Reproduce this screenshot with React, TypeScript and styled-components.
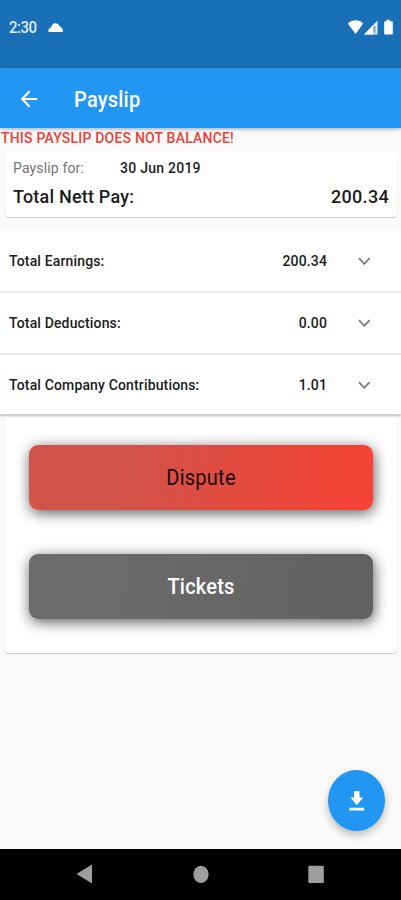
import React from 'react';
import styled, { createGlobalStyle } from 'styled-components';

const GlobalStyle = createGlobalStyle`
  * { box-sizing: border-box; }
  body { margin: 0; background: #fafafa; font-family: Roboto, sans-serif; }
`;

const Screen = styled.div`
  display: flex;
  flex-direction: column;
  width: 401px;
  height: 900px;
  overflow: hidden;
  background: #fafafa;
`;

const StatusBar = styled.header`
  display: flex;
  align-items: flex-start;
  justify-content: space-between;
  height: 68px;
  flex: none;
  padding: 19px 7px 0 9px;
  background: #1a70b7;
`;

const StatusGroup = styled.div<{ $gap: number }>`
  display: flex;
  align-items: center;
  height: 18px;
  gap: ${(p) => p.$gap}px;
`;

const Text = styled.span<{ $size: number; $weight?: number; $color?: string; $spacing?: number }>`
  display: block;
  white-space: nowrap;
  font-size: ${(p) => p.$size}px;
  line-height: 20px;
  font-weight: ${(p) => p.$weight ?? 500};
  color: ${(p) => p.$color ?? '#1c1c1c'};
  letter-spacing: ${(p) => p.$spacing ?? 0}px;
  transform: scaleY(1.07);
`;

const AppBar = styled.div`
  display: flex;
  align-items: center;
  gap: 34px;
  height: 60px;
  flex: none;
  padding: 3px 0 0 18px;
  background: #2196f3;
  box-shadow: 0 1px 4px rgba(0, 0, 0, 0.35);
  z-index: 1;
`;

const Warning = styled.div`
  height: 24px;
  flex: none;
  padding-left: 1px;
`;

const SummaryCard = styled.section`
  flex: none;
  height: 65px;
  margin: 0 4px 0 5px;
  padding: 6px 8px 0;
  background: #fff;
  border-radius: 4px;
  box-shadow: 0 1px 1px rgba(0, 0, 0, 0.2);
`;

const SummaryRow = styled.div<{ $height: number }>`
  display: grid;
  grid-template-columns: 107px 1fr auto;
  height: ${(p) => p.$height}px;
`;

const TotalRow = styled.div`
  display: flex;
  justify-content: space-between;
`;

const Panels = styled.section`
  flex: none;
  height: 184px;
  margin-top: 13px;
  background: #fff;
  box-shadow: 0 2px 2px rgba(0, 0, 0, 0.22);
`;

const Panel = styled.div`
  display: grid;
  grid-template-columns: 1fr auto 24px;
  align-items: center;
  height: 62px;
  padding: 0 25px 0 9px;
  column-gap: 25px;
  & + & { border-top: 2px solid #ebebeb; }
  &:first-child { height: 61px; }
  &:last-child { height: 61px; }
`;

const ActionCard = styled.section`
  display: flex;
  flex-direction: column;
  gap: 44px;
  flex: none;
  height: 235px;
  margin: 4px 4px 0 5px;
  padding: 27px 24px 0;
  background: #fff;
  border-radius: 4px;
  box-shadow: 0 1px 1px rgba(0, 0, 0, 0.2);
`;

const ActionButton = styled.button<{ $from: string; $to: string }>`
  display: flex;
  align-items: center;
  justify-content: center;
  width: 344px;
  height: 65px;
  padding: 1px 0 0;
  border: 0;
  border-radius: 9px;
  background: linear-gradient(100deg, ${(p) => p.$from} 25%, ${(p) => p.$to} 92%);
  box-shadow: 1px 3px 14px rgba(0, 0, 0, 0.65);
  font-family: inherit;
`;

const FabArea = styled.div`
  display: flex;
  flex: 1;
  align-items: flex-end;
  justify-content: flex-end;
  padding: 0 16px 18px 0;
`;

const Fab = styled.button`
  display: grid;
  place-items: center;
  width: 57px;
  height: 61px;
  padding: 0;
  border: 0;
  border-radius: 50%;
  background: #2196f3;
  box-shadow: 0 4px 8px rgba(0, 0, 0, 0.26);
`;

const NavBar = styled.nav`
  display: grid;
  grid-template-columns: 169px 63px 169px;
  flex: none;
  height: 51px;
  padding-top: 15px;
  background: #000;
  svg { display: block; }
`;

const NavSlot = styled.div<{ $justify: string; $pad?: string }>`
  display: flex;
  justify-content: ${(p) => p.$justify};
  padding: ${(p) => p.$pad ?? '0'};
`;

const panels = [
  { label: 'Total Earnings:', value: '200.34' },
  { label: 'Total Deductions:', value: '0.00' },
  { label: 'Total Company Contributions:', value: '1.01' },
];

const Chevron = () => (
  <svg width="24" height="24" viewBox="0 0 24 24" fill="none" stroke="#808080" strokeWidth="1.9">
    <path d="M7 9.200 12.300 14.800 17.600 9.200" />
  </svg>
);

export default function App() {
  return (
    <>
      <GlobalStyle />
      <Screen>
        <StatusBar>
          <StatusGroup $gap={11}>
            <Text $size={15} $color="#dfebf6" $weight={500} $spacing={-0.5}>2:30</Text>
            <svg width="16" height="10" viewBox="0 0 16 10" fill="#fff">
              <path d="M2 9C.6 9 .2 8.400.2 7.600.2 6.500 1.200 5.700 2.800 4.500 4 2.300 5 .2 7.200.2c2.300 0 3.800 1.700 4.700 3.300C14 4.700 15 6 15 7.500 15 8.500 14.400 9 13.500 9z" />
            </svg>
          </StatusGroup>
          <StatusGroup $gap={0}>
            <svg width="47" height="18" viewBox="0 0 47 18" fill="#fff">
              <path d="M.8 4.500C5 .2 12 .2 16.200 4.500L8.500 15z" />
              <path d="M17 15.500 30.500 1.500V15.500z" fill="#dceaf6" />
              <path d="M17 15.500 26 6.200V15.500z" />
              <path d="M26.500 7h2v7h-2z" fill="#7d9fc8" />
              <path d="M39.500.7h3.500v1.600h2q.8 0 .8 1v11q0 1.200-.8 1.200h-7q-.8 0-.8-1.200v-11q0-1 .8-1h1.500z" />
            </svg>
          </StatusGroup>
        </StatusBar>
        <AppBar>
          <svg width="22" height="24" viewBox="0 0 22 24" fill="none" stroke="#fff" strokeWidth="2.100">
            <path d="M19.300 11H4M11.600 3.200 4.200 11l7.400 7.800" />
          </svg>
          <Text $size={20} $color="#fff" $spacing={0.22}>Payslip</Text>
        </AppBar>
        <Warning>
          <Text $size={14} $color="#ed4038" $spacing={0.2}>THIS PAYSLIP DOES NOT BALANCE!</Text>
        </Warning>
        <SummaryCard>
          <SummaryRow $height={29}>
            <Text $size={14} $weight={400} $color="#757575" $spacing={0.15}>Payslip for:</Text>
            <Text $size={14} $spacing={0.25}>30 Jun 2019</Text>
          </SummaryRow>
          <TotalRow>
            <Text $size={18} $spacing={0.2}>Total Nett Pay:</Text>
            <Text $size={18} $spacing={0.3}>200.34</Text>
          </TotalRow>
        </SummaryCard>
        <Panels>
          {panels.map((p) => (
            <Panel key={p.label}>
              <Text $size={14} $spacing={0.15}>{p.label}</Text>
              <Text $size={14} $spacing={0.15}>{p.value}</Text>
              <Chevron />
            </Panel>
          ))}
        </Panels>
        <ActionCard>
          <ActionButton $from="#d0544a" $to="#f44336">
            <Text $size={20} $weight={400} $color="#180503" $spacing={0.25}>Dispute</Text>
          </ActionButton>
          <ActionButton $from="#6b6b6b" $to="#616161">
            <Text $size={20} $color="#fff" $spacing={0.2}>Tickets</Text>
          </ActionButton>
        </ActionCard>
        <FabArea>
          <Fab aria-label="Download">
            <svg width="16" height="20" viewBox="0 0 16 20" fill="#fff">
              <path d="M5 .3h5.500v6.200h3.700L7.800 14.200 1.500 6.500H5zM.5 16.800h14.700v2.600H.5z" />
            </svg>
          </Fab>
        </FabArea>
        <NavBar>
          <NavSlot $justify="flex-start" $pad="0 0 0 76px">
            <svg width="17" height="20" viewBox="0 0 17 20" fill="#9e9e9e"><path d="M.5 10 16 .5v19z" /></svg>
          </NavSlot>
          <NavSlot $justify="center">
            <svg width="16" height="20" viewBox="0 0 16 20" fill="#9e9e9e"><ellipse cx="8" cy="10.300" rx="7.600" ry="8.600" /></svg>
          </NavSlot>
          <NavSlot $justify="flex-start" $pad="0 0 0 76px">
            <svg width="16" height="20" viewBox="0 0 16 20" fill="#9e9e9e"><rect x=".3" y="1.700" width="15.500" height="17.300" rx="1" /></svg>
          </NavSlot>
        </NavBar>
      </Screen>
    </>
  );
}
